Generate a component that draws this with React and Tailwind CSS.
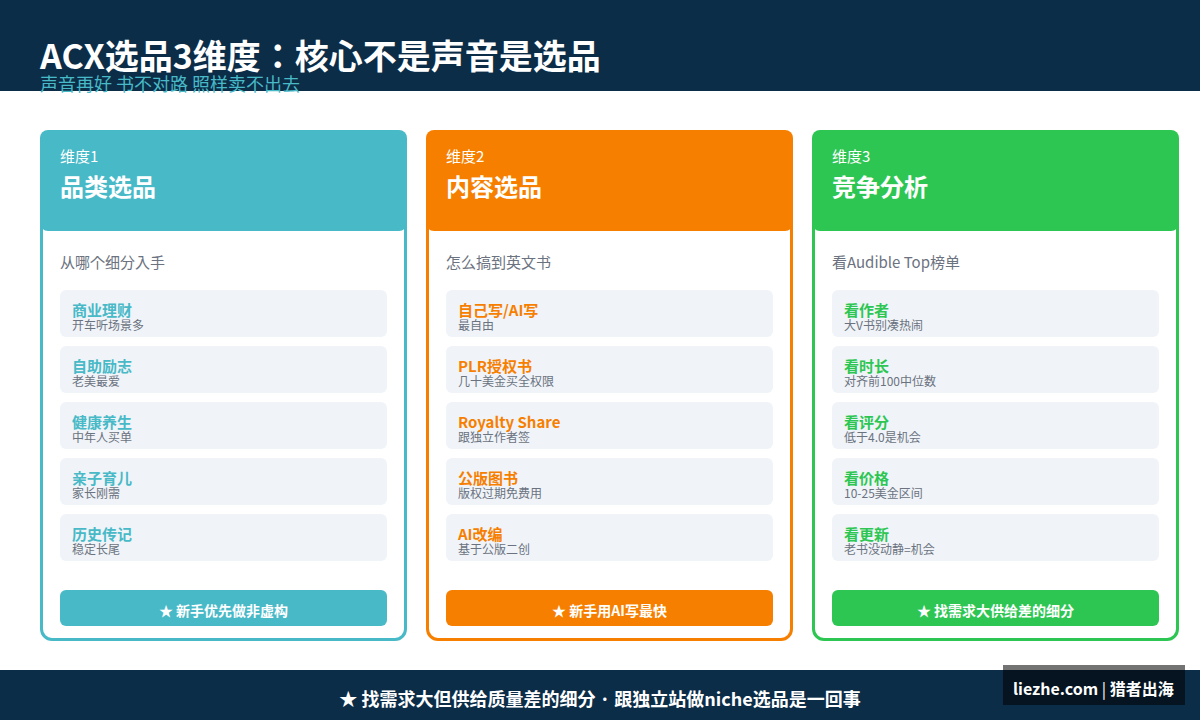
const columns = [
  {
    label: '维度1',
    title: '品类选品',
    desc: '从哪个细分入手',
    tip: '★ 新手优先做非虚构',
    border: 'border-[#48b9c7]',
    bg: 'bg-[#48b9c7]',
    text: 'text-[#48b9c7]',
    items: [
      ['商业理财', '开车听场景多'],
      ['自助励志', '老美最爱'],
      ['健康养生', '中年人买单'],
      ['亲子育儿', '家长刚需'],
      ['历史传记', '稳定长尾'],
    ],
  },
  {
    label: '维度2',
    title: '内容选品',
    desc: '怎么搞到英文书',
    tip: '★ 新手用AI写最快',
    border: 'border-[#f77f00]',
    bg: 'bg-[#f77f00]',
    text: 'text-[#f77f00]',
    items: [
      ['自己写/AI写', '最自由'],
      ['PLR授权书', '几十美金买全权限'],
      ['Royalty Share', '跟独立作者签'],
      ['公版图书', '版权过期免费用'],
      ['AI改编', '基于公版二创'],
    ],
  },
  {
    label: '维度3',
    title: '竞争分析',
    desc: '看Audible Top榜单',
    tip: '★ 找需求大供给差的细分',
    border: 'border-[#2dc653]',
    bg: 'bg-[#2dc653]',
    text: 'text-[#2dc653]',
    items: [
      ['看作者', '大V书别凑热闹'],
      ['看时长', '对齐前100中位数'],
      ['看评分', '低于4.0是机会'],
      ['看价格', '10-25美金区间'],
      ['看更新', '老书没动静=机会'],
    ],
  },
]

function Card({ col }) {
  return (
    <div className={`flex flex-col h-[511px] border-[3px] rounded-xl bg-white ${col.border}`}>
      <div className={`-mx-[3px] -mt-[3px] h-[101px] rounded-lg px-5 pt-[16px] text-white ${col.bg}`}>
        <div className="text-[15px] leading-[20px]">{col.label}</div>
        <div className="mt-[4px] text-2xl leading-[32px] font-bold">{col.title}</div>
      </div>
      <div className="flex flex-col flex-1 px-[17px]">
        <div className="mt-[20px] text-[15px] leading-[22px] text-[#6b7280]">{col.desc}</div>
        <div className="mt-[17px] flex flex-col gap-[9px]">
          {col.items.map(([name, sub]) => (
            <div key={name} className="h-[47px] rounded-md bg-[#f0f4f8] px-3 pt-[11px]">
              <div className={`text-[15px] leading-[18px] font-bold ${col.text}`}>{name}</div>
              <div className="-mt-[1px] text-xs leading-[14px] text-[#6b7280]">{sub}</div>
            </div>
          ))}
        </div>
        <div className={`mt-[29px] h-[36px] rounded-md pt-[10px] text-center text-sm leading-[20px] font-bold text-white ${col.bg}`}>
          {col.tip}
        </div>
      </div>
    </div>
  )
}

export default function App() {
  return (
    <div className="relative flex flex-col w-[1200px] h-[720px] overflow-hidden bg-white font-['Noto_Sans_CJK_JP','Noto_Sans',sans-serif]">
      <header className="h-[91px] shrink-0 bg-[#0c2d48] px-10 pt-[35px]">
        <h1 className="text-[34px] leading-[40px] font-bold text-white">ACX选品3维度：核心不是声音是选品</h1>
        <p className="-mt-[2px] text-lg leading-[20px] text-[#48b9c7]">声音再好 书不对路 照样卖不出去</p>
      </header>

      <main className="flex-1 grid grid-cols-3 gap-[19px] pl-10 pr-[21px] pt-[39px]">
        {columns.map((col) => (
          <Card key={col.title} col={col} />
        ))}
      </main>

      <footer className="h-[50px] shrink-0 bg-[#0c2d48] pt-[3px] text-center text-lg leading-[50px] font-bold text-white">
        ★ 找需求大但供给质量差的细分 · 跟独立站做niche选品是一回事
      </footer>

      <div className="absolute left-[1003px] top-[665px] w-[182px] h-[40px] bg-black/55 pl-[10px] text-base leading-[46px] font-bold whitespace-nowrap text-white">
        liezhe.com <span className="font-normal">|</span> 猎者出海
      </div>
    </div>
  )
}
